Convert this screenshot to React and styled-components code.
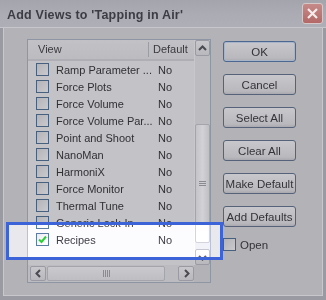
import React from "react";
import styled, { createGlobalStyle } from "styled-components";

const Global = createGlobalStyle`
  html, body { margin: 0; padding: 0; background: #b3b3b7; }
  body { font-family: "Liberation Sans", Arial, sans-serif; }
`;

const Window = styled.div`
  position: relative;
  width: 326px;
  height: 300px;
  box-sizing: border-box;
  display: flex;
  flex-direction: column;
  background: #b3b3b7;
  overflow: hidden;
`;

const TitleBar = styled.div`
  height: 28px;
  flex: none;
  display: flex;
  align-items: center;
  padding: 0 3px 0 7px;
  box-sizing: border-box;
  background: linear-gradient(#a4a4ad, #acacb4 60%, #aeaeb6);
  border-bottom: 1px solid #c6c6cc;
`;

const Title = styled.div`
  flex: 1;
  font-family: "Liberation Sans", Arial, sans-serif;
  font-weight: bold;
  font-size: 12.5px;
  letter-spacing: 0.2px;
  color: #3c3c44;
  padding-top: 2px;
`;

const CloseBtn = styled.div`
  width: 21px;
  height: 21px;
  box-sizing: border-box;
  border: 1px solid #d6c8c8;
  border-radius: 3px;
  background: linear-gradient(#c58a88, #b36866);
  display: flex;
  align-items: center;
  justify-content: center;
`;

const Client = styled.div`
  flex: 1;
  display: flex;
  align-items: flex-start;
  padding: 11px 0 0 24px;
  border-left: 3px solid #9a9aa2;
  border-right: 3px solid #9a9aa2;
  border-bottom: 4px solid #9a9aa2;
  box-shadow: inset 1px 0 0 #c8c8cc, inset -1px 0 0 #c8c8cc, inset 0 -1px 0 #c8c8cc;
`;

const ListBox = styled.div`
  width: 184px;
  height: 244px;
  box-sizing: border-box;
  border: 1px solid #8e96a4;
  background: #c3c3c7;
  display: grid;
  grid-template-columns: 1fr 16px;
  grid-template-rows: 1fr 17px;
`;

const ListMain = styled.div`
  display: flex;
  flex-direction: column;
  overflow: hidden;
`;

const Header = styled.div`
  height: 21px;
  flex: none;
  display: grid;
  grid-template-columns: 121px 1fr;
  align-items: center;
  background: linear-gradient(#c2c2c6, #bcbcc0);
  border-bottom: 2px solid #aeaeb4;
  box-sizing: border-box;
  font-family: "Liberation Sans", Arial, sans-serif;
  font-size: 11px;
  color: #3a3a3e;
`;

const HeadCell = styled.div`
  padding-left: ${(p) => p.$pad}px;
  height: 15px;
  line-height: 15px;
  border-right: ${(p) => (p.$sep ? "1px solid #9c9ca4" : "none")};
  white-space: nowrap;
  overflow: hidden;
`;

const Row = styled.div`
  height: 17px;
  flex: none;
  display: grid;
  grid-template-columns: 121px 1fr;
  align-items: center;
  font-family: "Liberation Sans", Arial, sans-serif;
  font-size: 11px;
  color: #303034;
`;

const NameCell = styled.div`
  display: flex;
  align-items: center;
  gap: 7px;
  padding-left: 8px;
  white-space: nowrap;
  min-width: 0;
`;

const ValCell = styled.div`
  padding-left: 9px;
`;

const Box = styled.div`
  width: 13px;
  height: 13px;
  flex: none;
  box-sizing: border-box;
  border: 1px solid #46607e;
  background: linear-gradient(135deg, #b4b4b8, #cacace);
  display: flex;
  align-items: center;
  justify-content: center;
`;

const VScroll = styled.div`
  grid-row: 1;
  grid-column: 2;
  display: flex;
  flex-direction: column;
  background: #bbbbc0;
  border-left: 1px solid #c8c8cc;
`;

const ArrowBtn = styled.div`
  width: ${(p) => p.$w || 15}px;
  height: ${(p) => p.$h || 16}px;
  flex: none;
  box-sizing: border-box;
  border: 1px solid #9a9aa4;
  border-radius: 2px;
  background: linear-gradient(#c8c8cc, #b8b8bd);
  display: flex;
  align-items: center;
  justify-content: center;
`;

const VTrack = styled.div`
  flex: 1;
  display: flex;
  flex-direction: column;
  padding-top: ${(p) => p.$top}px;
`;

const VThumb = styled.div`
  height: 119px;
  box-sizing: border-box;
  border: 1px solid #a4a4ac;
  border-radius: 2px;
  background: linear-gradient(90deg, #c4c4c8, #d2d2d6 50%, #c0c0c4);
  display: flex;
  align-items: center;
  justify-content: center;
`;

const HScroll = styled.div`
  grid-row: 2;
  grid-column: 1;
  display: flex;
  align-items: center;
  background: #bbbbc0;
  padding-left: 2px;
`;

const HThumb = styled.div`
  width: 118px;
  height: 15px;
  margin-left: 1px;
  box-sizing: border-box;
  border: 1px solid #a4a4ac;
  border-radius: 2px;
  background: linear-gradient(#cacace, #bebec2);
  display: flex;
  align-items: center;
  justify-content: center;
`;

const HGap = styled.div`
  flex: 1;
`;

const Corner = styled.div`
  grid-row: 2;
  grid-column: 2;
  background: #b3b3b7;
`;

const Buttons = styled.div`
  margin-left: 12px;
  margin-top: 2px;
  display: flex;
  flex-direction: column;
  gap: 12px;
`;

const Button = styled.div`
  width: 73px;
  height: 21px;
  box-sizing: border-box;
  border: 1px solid ${(p) => (p.$def ? "#4c6890" : "#56627a")};
  border-radius: 3px;
  background: linear-gradient(#c8c8cc, #b8b8bd 85%, #a8a8ae);
  box-shadow: ${(p) => (p.$def ? "inset 0 0 0 1px #a8b4c8" : "none")};
  display: flex;
  align-items: center;
  justify-content: center;
  font-family: "Liberation Sans", Arial, sans-serif;
  font-size: 11.5px;
  color: #343438;
  white-space: nowrap;
`;

const OpenRow = styled.div`
  display: flex;
  align-items: center;
  gap: 4px;
  margin-top: -1px;
  font-family: "Liberation Sans", Arial, sans-serif;
  font-size: 11.5px;
  color: #343438;
`;

const Highlight = styled.div`
  position: absolute;
  left: 6px;
  top: 222px;
  width: 217px;
  height: 38px;
  box-sizing: border-box;
  border: 3px solid #3d63d8;
  pointer-events: none;
`;

const Glow = styled.div`
  width: 100%;
  height: 100%;
  background: #3a3a3a;
  mix-blend-mode: color-dodge;
`;

const items = [
  "Ramp Parameter ...",
  "Force Plots",
  "Force Volume",
  "Force Volume Par...",
  "Point and Shoot",
  "NanoMan",
  "HarmoniX",
  "Force Monitor",
  "Thermal Tune",
  "Generic Lock-In",
  "Recipes",
];

const Chevron = ({ dir }) => {
  const paths = {
    up: "M2 7 L5.5 3.5 L9 7",
    down: "M2 4 L5.5 7.5 L9 4",
    left: "M7 2 L3.5 5.5 L7 9",
    right: "M4 2 L7.5 5.5 L4 9",
  };
  return (
    <svg width="11" height="11" viewBox="0 0 11 11">
      <path d={paths[dir]} fill="none" stroke="#4a4a52" strokeWidth="2" />
    </svg>
  );
};

export default function App() {
  return (
    <>
      <Global />
      <Window>
        <TitleBar>
          <Title>Add Views to 'Tapping in Air'</Title>
          <CloseBtn>
            <svg width="13" height="13" viewBox="0 0 13 13">
              <path d="M2 2 L11 11 M11 2 L2 11" stroke="#f4ecec" strokeWidth="2.2" />
            </svg>
          </CloseBtn>
        </TitleBar>
        <Client>
          <ListBox>
            <ListMain>
              <Header>
                <HeadCell $pad={10} $sep>View</HeadCell>
                <HeadCell $pad={4}>Default</HeadCell>
              </Header>
              {items.map((t, i) => (
                <Row key={t}>
                  <NameCell>
                    <Box>
                      {i === items.length - 1 && (
                        <svg width="9" height="9" viewBox="0 0 9 9">
                          <path d="M1 4.5 L3.5 7 L8 1.5" fill="none" stroke="#22a02a" strokeWidth="2" />
                        </svg>
                      )}
                    </Box>
                    {t}
                  </NameCell>
                  <ValCell>No</ValCell>
                </Row>
              ))}
            </ListMain>
            <VScroll>
              <ArrowBtn>
                <Chevron dir="up" />
              </ArrowBtn>
              <VTrack $top={68}>
                <VThumb>
                  <svg width="7" height="6" viewBox="0 0 7 6">
                    <path d="M0 0.5 H7 M0 2.5 H7 M0 4.5 H7" stroke="#8a8a92" strokeWidth="1" />
                  </svg>
                </VThumb>
              </VTrack>
              <ArrowBtn>
                <Chevron dir="down" />
              </ArrowBtn>
            </VScroll>
            <HScroll>
              <ArrowBtn $w={16} $h={15}>
                <Chevron dir="left" />
              </ArrowBtn>
              <HThumb>
                <svg width="7" height="7" viewBox="0 0 7 7">
                  <path d="M0.5 0 V7 M2.5 0 V7 M4.5 0 V7 M6.5 0 V7" stroke="#8a8a92" strokeWidth="1" />
                </svg>
              </HThumb>
              <HGap />
              <ArrowBtn $w={16} $h={15}>
                <Chevron dir="right" />
              </ArrowBtn>
            </HScroll>
            <Corner />
          </ListBox>
          <Buttons>
            <Button $def>OK</Button>
            <Button>Cancel</Button>
            <Button>Select All</Button>
            <Button>Clear All</Button>
            <Button>Make Default</Button>
            <Button>Add Defaults</Button>
            <OpenRow>
              <Box />
              Open
            </OpenRow>
          </Buttons>
        </Client>
        <Highlight>
          <Glow />
        </Highlight>
      </Window>
    </>
  );
}
